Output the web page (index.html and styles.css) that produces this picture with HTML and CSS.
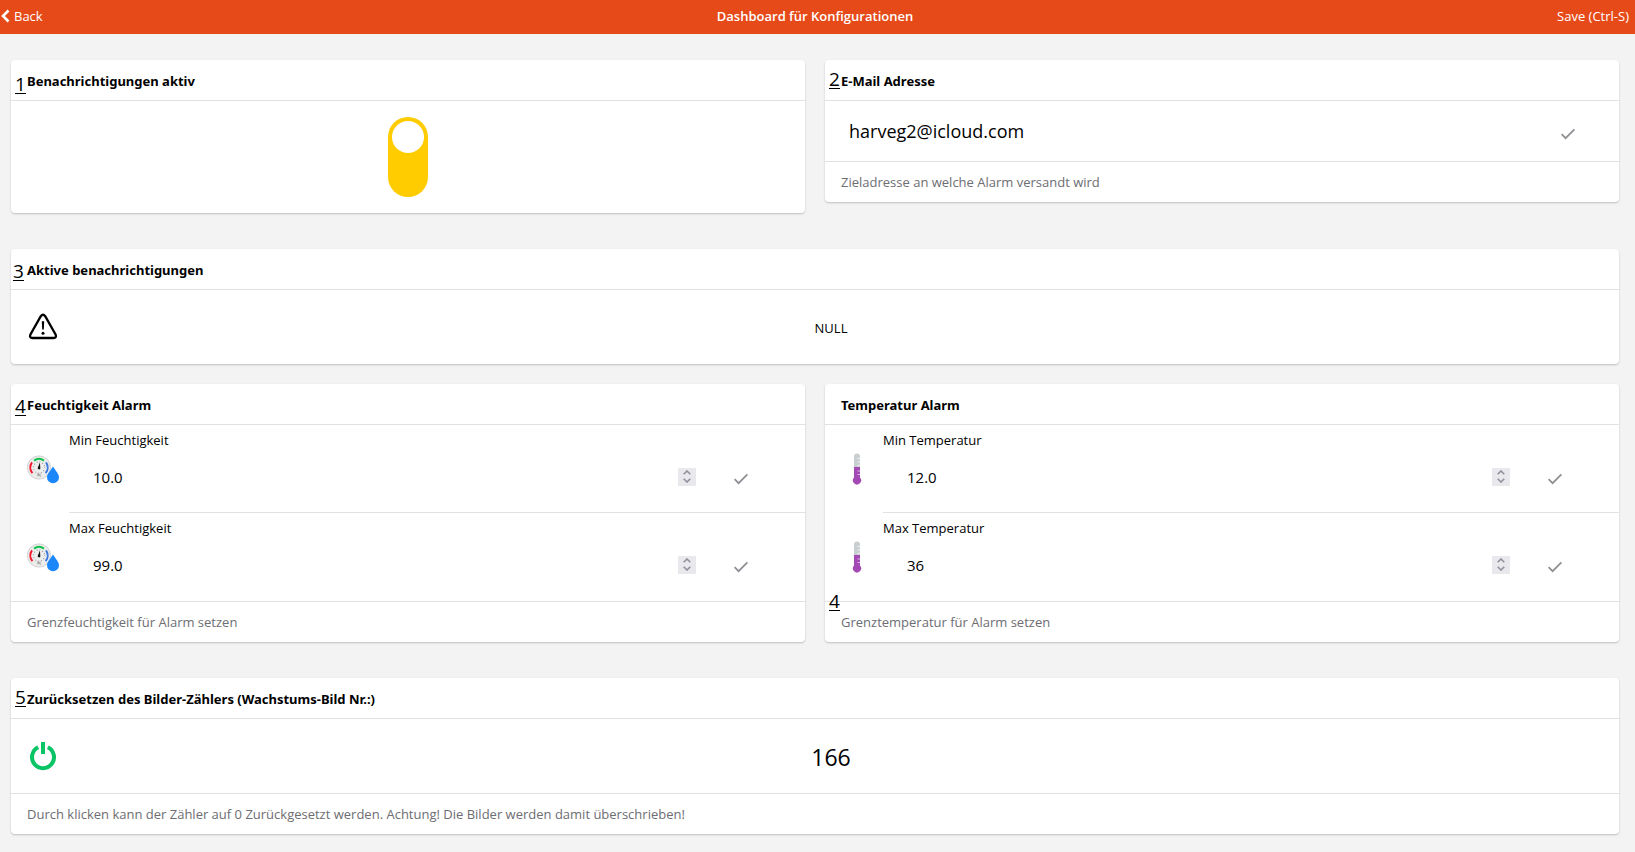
FILE: index.html
```html
<!DOCTYPE html>
<html lang="de">
<head>
<meta charset="utf-8">
<title>Dashboard für Konfigurationen</title>
<link rel="stylesheet" href="styles.css">
</head>
<body>
<svg class="defs" aria-hidden="true">
  <symbol id="check" viewBox="0 0 16 16"><path d="M1.6 8.2 5.6 12.2 14.4 3.4" fill="none" stroke="currentColor" stroke-width="1.7"/></symbol>
  <symbol id="up" viewBox="0 0 8 5"><path d="M.7 4.2 4 1 7.300 4.200" fill="none" stroke="currentColor" stroke-width="1.600"/></symbol>
  <symbol id="down" viewBox="0 0 8 5"><path d="M.7.8 4 4 7.300.8" fill="none" stroke="currentColor" stroke-width="1.600"/></symbol>
  <symbol id="humidity" viewBox="0 0 32 32">
    <circle cx="12" cy="14.500" r="11.600" fill="#ededed" stroke="#d2d2d2" stroke-width="1"/>
    <circle cx="12" cy="14.500" r="5.600" fill="none" stroke="#777" stroke-width="1.200" stroke-dasharray=".6 2.330"/>
    <g fill="none" stroke-width="2">
      <path d="M7 7.600A8.500 8.500 0 0 1 17 7.600" stroke="#12c04c"/>
      <path d="M5.400 20.200A8.800 8.800 0 0 1 5 9.400" stroke="#f5172c"/>
      <path d="M19 9.400A8.800 8.800 0 0 1 18.600 20.200" stroke="#3a7be0"/>
    </g>
    <path d="M12.900 9.500 13.300 14.800A1.300 1.300 0 1 1 10.900 14.400Z" fill="#111"/>
    <path d="m10 20.500 4 3m-3.800-.2 3.400-2.600" stroke="#aaa" stroke-width="1.100"/>
    <path d="M26 13.500C28.600 18 32 20.500 32 24.300A6 6 0 0 1 20 24.300C20 20.500 23.400 18 26 13.500Z" fill="#1c86fb"/>
  </symbol>
  <symbol id="thermo" viewBox="0 0 32 32">
    <path d="M13 14V3.500A3 3 0 0 1 19 3.500V14Z" fill="#c9cfd1"/>
    <path d="M13 14H19V24.500A4.100 4.100 0 1 1 13 24.500Z" fill="#a349b4"/>
    <path d="M16.500 5.500H19M16.500 9H19M16.500 12.500H19" stroke="#eef0f0"/>
    <path d="M16.500 18H19M16.500 21.500H19" stroke="#dcb6e4"/>
  </symbol>
</svg>

<header class="navbar">
  <a class="nav-link back" href="#"><svg class="chevron" viewBox="0 0 9 14" aria-hidden="true"><path d="M7.500 1.500 2 7 7.500 12.500" fill="none" stroke="currentColor" stroke-width="2.600"/></svg>Back</a>
  <h1 class="nav-title">Dashboard für Konfigurationen</h1>
  <a class="nav-link save" href="#">Save (Ctrl-S)</a>
</header>

<main class="page">
  <section class="card">
    <span class="mark mark-low">1</span>
    <h2 class="card-title" id="t1">Benachrichtigungen aktiv</h2>
    <div class="toggle-body"><input class="toggle" type="checkbox" role="switch" checked aria-labelledby="t1"></div>
  </section>

  <section class="card">
    <span class="mark mark-high">2</span>
    <h2 class="card-title" id="t2">E-Mail Adresse</h2>
    <div class="mail-body">
      <input class="mail-input" type="email" value="harveg2@icloud.com" aria-labelledby="t2">
      <button class="confirm" type="button" aria-label="E-Mail bestätigen"><svg><use href="#check"/></svg></button>
    </div>
    <p class="card-footer">Zieladresse an welche Alarm versandt wird</p>
  </section>

  <section class="card wide spaced">
    <span class="mark mark-mid mark-near">3</span>
    <h2 class="card-title">Aktive benachrichtigungen</h2>
    <div class="value-body">
      <svg class="item-icon" viewBox="0 0 32 32" aria-hidden="true">
        <path d="M13.800 5.200Q16 2.300 18.200 5.200L28.700 23.800Q29.800 27 26.500 27H5.500Q2.200 27 3.300 23.800Z" fill="none" stroke="#000" stroke-width="2.300"/>
        <path d="M14.800 10.200H17.200L16.800 18.600H15.200Z"/><circle cx="16" cy="22.200" r="1.500"/>
      </svg>
      <span class="value">NULL</span>
    </div>
  </section>

  <section class="card">
    <span class="mark mark-mid">4</span>
    <h2 class="card-title">Feuchtigkeit Alarm</h2>
    <div class="row">
      <svg class="item-icon" aria-hidden="true"><use href="#humidity"/></svg>
      <div class="row-main">
        <label for="minf">Min Feuchtigkeit</label>
        <div class="field">
          <input class="num" id="minf" type="number" step="0.1" value="10.0">
          <div class="stepper"><button type="button" aria-label="Erhöhen"><svg><use href="#up"/></svg></button><button type="button" aria-label="Verringern"><svg><use href="#down"/></svg></button></div>
          <button class="confirm" type="button" aria-label="Bestätigen"><svg><use href="#check"/></svg></button>
        </div>
      </div>
    </div>
    <div class="row">
      <svg class="item-icon" aria-hidden="true"><use href="#humidity"/></svg>
      <div class="row-main">
        <label for="maxf">Max Feuchtigkeit</label>
        <div class="field">
          <input class="num" id="maxf" type="number" step="0.1" value="99.0">
          <div class="stepper"><button type="button" aria-label="Erhöhen"><svg><use href="#up"/></svg></button><button type="button" aria-label="Verringern"><svg><use href="#down"/></svg></button></div>
          <button class="confirm" type="button" aria-label="Bestätigen"><svg><use href="#check"/></svg></button>
        </div>
      </div>
    </div>
    <p class="card-footer">Grenzfeuchtigkeit für Alarm setzen</p>
  </section>

  <section class="card">
    <span class="mark mark-bottom">4</span>
    <h2 class="card-title">Temperatur Alarm</h2>
    <div class="row">
      <svg class="item-icon" aria-hidden="true"><use href="#thermo"/></svg>
      <div class="row-main">
        <label for="mint">Min Temperatur</label>
        <div class="field">
          <input class="num" id="mint" type="number" step="0.1" value="12.0">
          <div class="stepper"><button type="button" aria-label="Erhöhen"><svg><use href="#up"/></svg></button><button type="button" aria-label="Verringern"><svg><use href="#down"/></svg></button></div>
          <button class="confirm" type="button" aria-label="Bestätigen"><svg><use href="#check"/></svg></button>
        </div>
      </div>
    </div>
    <div class="row">
      <svg class="item-icon" aria-hidden="true"><use href="#thermo"/></svg>
      <div class="row-main">
        <label for="maxt">Max Temperatur</label>
        <div class="field">
          <input class="num" id="maxt" type="number" step="0.1" value="36">
          <div class="stepper"><button type="button" aria-label="Erhöhen"><svg><use href="#up"/></svg></button><button type="button" aria-label="Verringern"><svg><use href="#down"/></svg></button></div>
          <button class="confirm" type="button" aria-label="Bestätigen"><svg><use href="#check"/></svg></button>
        </div>
      </div>
    </div>
    <p class="card-footer">Grenztemperatur für Alarm setzen</p>
  </section>

  <section class="card wide spaced">
    <span class="mark mark-high">5</span>
    <h2 class="card-title">Zurücksetzen des Bilder-Zählers (Wachstums-Bild Nr.:)</h2>
    <div class="value-body">
      <button class="power" type="button" aria-label="Zähler zurücksetzen"><svg class="item-icon" viewBox="0 0 32 32"><path d="M11.200 7.300A11 11 0 1 0 20.800 7.300M16 2V14" fill="none" stroke="#0bc465" stroke-width="4"/></svg></button>
      <span class="value value-large">166</span>
    </div>
    <p class="card-footer">Durch klicken kann der Zähler auf 0 Zurückgesetzt werden. Achtung! Die Bilder werden damit überschrieben!</p>
  </section>
</main>
</body>
</html>
```
FILE: styles.css
```css
* { box-sizing: border-box; }
body {
  margin: 0;
  background: #f3f3f3;
  color: #000;
  font: 13px/20px "Open Sans", "Noto Sans", sans-serif;
}
.defs { display: none; }
h1, h2, p { margin: 0; }
button { padding: 0; border: 0; background: none; color: inherit; cursor: pointer; }
input { font: inherit; color: inherit; }

.navbar {
  display: grid;
  grid-template-columns: 1fr auto 1fr;
  align-items: center;
  height: 34px;
  padding: 0 6px 2px 1px;
  background: #e64a19;
  color: #fff;
}
.nav-link { display: flex; align-items: center; gap: 4px; color: inherit; text-decoration: none; }
.save { justify-self: end; }
.chevron { width: 9px; height: 14px; }
.nav-title { font-size: 13px; line-height: 20px; font-weight: 600; }

.page {
  display: grid;
  grid-template-columns: 1fr 1fr;
  align-items: start;
  gap: 20px;
  padding: 26px 16px 18px 11px;
}
.card {
  position: relative;
  background: #fff;
  border-radius: 4px;
  box-shadow: 0 1px 2px rgba(0, 0, 0, .22);
}
.wide { grid-column: 1 / -1; }
.spaced { margin-top: 16px; }
.card-title {
  padding: 11px 16px 9px;
  border-bottom: 1px solid #e1e1e1;
  font-family: "Noto Sans", "Open Sans", sans-serif;
  font-size: 13px;
  line-height: 20px;
  font-weight: 700;
}
.card-footer {
  padding: 10px 16px;
  border-top: 1px solid #e1e1e1;
  color: #6d6d72;
}

/* Numbered annotations laid over the cards */
.mark {
  position: absolute;
  left: 4px;
  border-bottom: 1px solid #000;
  font-size: 19px;
  line-height: 18px;
}
.mark-near { left: 2px; }
.mark-high { top: 10px; }
.mark-mid { top: 13px; }
.mark-low { top: 15px; }
.mark-bottom { top: 208px; }

.toggle-body { display: flex; justify-content: center; padding: 16px; }
.toggle {
  appearance: none;
  width: 40px;
  height: 80px;
  margin: 0;
  padding: 4px;
  border-radius: 20px;
  background: #fc0;
}
.toggle::before {
  content: "";
  display: block;
  width: 32px;
  height: 32px;
  border-radius: 50%;
  background: #fff;
}

.mail-body { display: flex; align-items: center; height: 60px; padding: 0 39px 0 16px; }
.mail-input { flex: 1; min-width: 0; padding: 0 8px; border: 0; background: none; font-size: 18px; line-height: 28px; }
.confirm { display: flex; margin-top: 5px; padding: 4px; color: #8e8e93; }
.confirm svg { width: 16px; height: 16px; }

.value-body { display: flex; align-items: center; min-height: 74px; padding: 0 16px; }
.item-icon { flex: none; display: block; width: 32px; height: 32px; }
.value { flex: 1; padding-top: 2px; text-align: center; }
.value-large { font-size: 23px; line-height: 32px; }

.row { display: flex; align-items: center; gap: 10px; padding-left: 16px; }
.row-main { flex: 1; padding: 5px 52px 9px 0; border-bottom: 1px solid #e1e1e1; }
.row + .row .row-main { border-bottom-color: transparent; }
.row-main label { display: block; }
.field { display: flex; align-items: center; height: 53px; padding-left: 16px; }
.num {
  appearance: textfield;
  flex: 1;
  min-width: 0;
  padding: 0 8px;
  border: 0;
  background: none;
  font-size: 15px;
  line-height: 24px;
}
.num::-webkit-inner-spin-button { appearance: none; margin: 0; }
.stepper {
  display: flex;
  flex-direction: column;
  justify-content: center;
  gap: 3px;
  width: 18px;
  height: 18px;
  margin-right: 33px;
  background: #e9e9ed;
  color: #8f8f9d;
}
.stepper button { display: flex; justify-content: center; }
.stepper svg { width: 8px; height: 5px; }
```
